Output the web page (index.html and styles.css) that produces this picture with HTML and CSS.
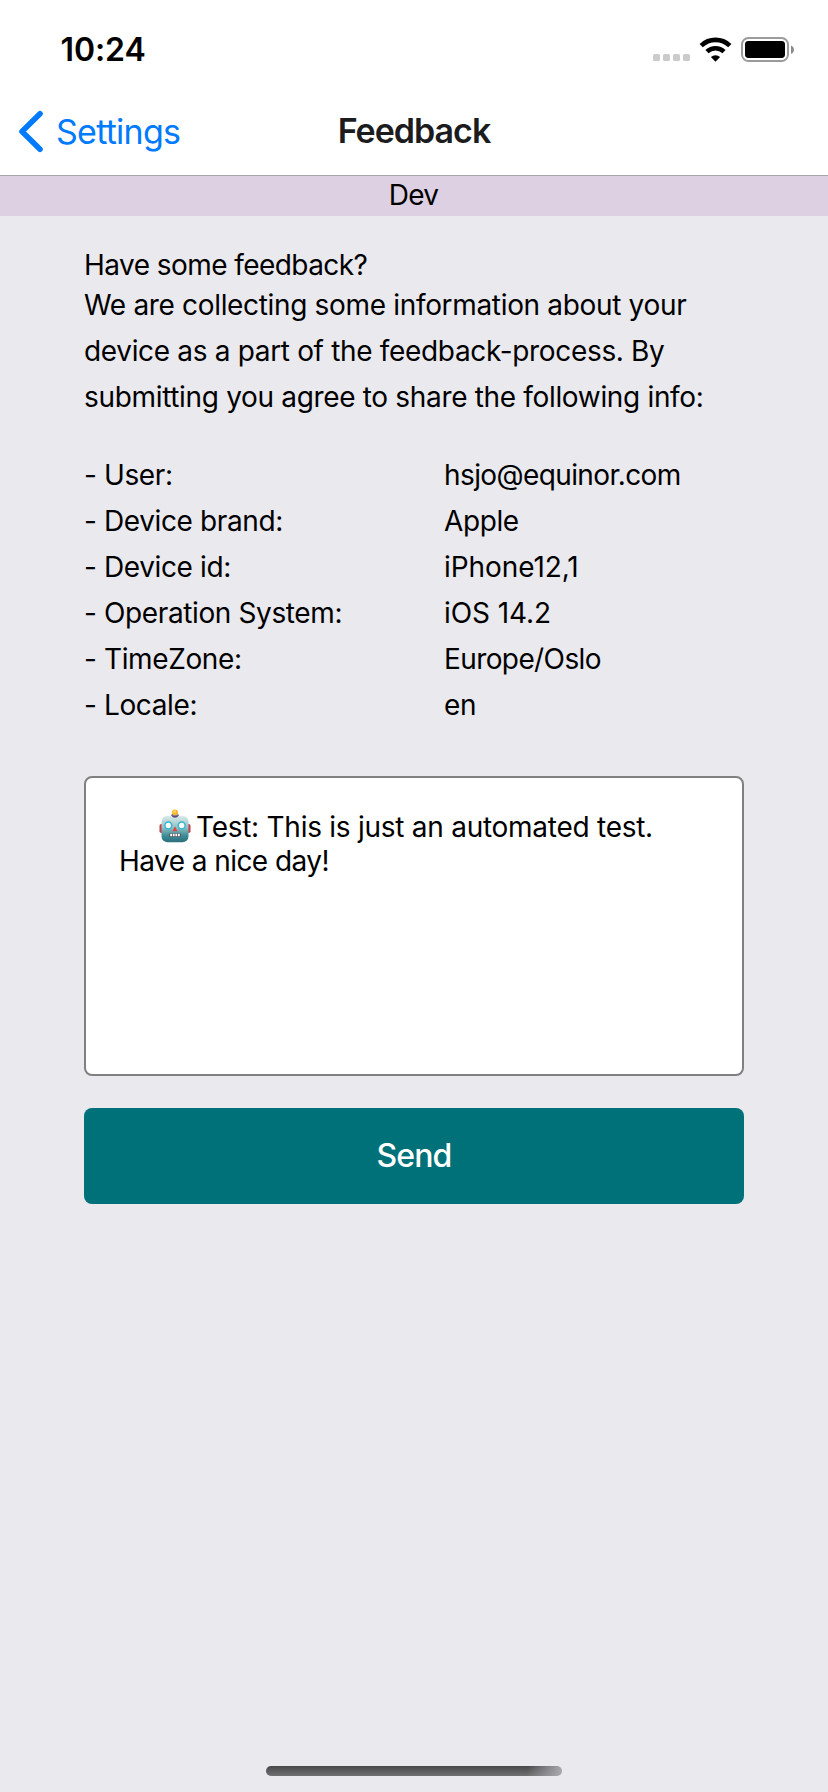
FILE: index.html
```html
<!DOCTYPE html>
<html lang="en">
<head>
<meta charset="utf-8">
<title>Feedback</title>
<link rel="stylesheet" href="styles.css">
</head>
<body>
<div class="screen">
  <header class="top">
    <div class="status">
      <span class="clock">10:24</span>
      <svg class="status-icons" width="144" height="32" viewBox="0 0 144 32">
        <g fill="#cbcbcb">
          <rect x="1" y="20" width="7" height="7" rx="1.6"/>
          <rect x="11" y="20" width="7" height="7" rx="1.6"/>
          <rect x="21" y="20" width="7" height="7" rx="1.6"/>
          <rect x="31" y="20" width="7" height="7" rx="1.6"/>
        </g>
        <g fill="none" stroke="#000" stroke-width="4.6">
          <path d="M49.2 11.6a20.6 20.6 0 0 1 28.6 0"/>
          <path d="M55 17.6a12.4 12.4 0 0 1 17 0"/>
        </g>
        <path d="M58.9 23.1a6.8 6.8 0 0 1 9.2 0L63.5 27.8z"/>
        <rect x="90" y="4" width="46" height="23" rx="6.5" fill="#fff" stroke="#9b9b9b" stroke-width="2"/>
        <rect x="93" y="7" width="40" height="17" rx="3.4"/>
        <path d="M139 11.5c4 1.5 4 7 0 8.5z" fill="#8c8c8c"/>
      </svg>
    </div>
    <nav class="nav">
      <a class="back">
        <svg width="26" height="44" viewBox="0 0 26 44"><path d="M23 4.800L5 22.500L23 40.200" fill="none" stroke="#007aff" stroke-width="5.600" stroke-linecap="round" stroke-linejoin="round"/></svg>
        <span class="back-label">Settings</span>
      </a>
      <h1 class="title">Feedback</h1>
    </nav>
  </header>
  <div class="env">Dev</div>
  <main class="content">
    <p class="lead">Have some feedback?</p>
    <p class="info">We are collecting some information about your<br>device as a part of the feedback-process. By<br>submitting you agree to share the following info:</p>
    <dl class="details">
      <dt>- User:</dt><dd class="tight">hsjo@equinor.com</dd>
      <dt>- Device brand:</dt><dd>Apple</dd>
      <dt>- Device id:</dt><dd class="loose">iPhone12,1</dd>
      <dt>- Operation System:</dt><dd class="loose">iOS 14.2</dd>
      <dt>- TimeZone:</dt><dd class="tight">Europe/Oslo</dd>
      <dt>- Locale:</dt><dd>en</dd>
    </dl>
    <div class="message">
      <svg class="robot" width="32" height="34" viewBox="0 0 32 34">
        <defs>
          <linearGradient id="face" x1="0" y1="0" x2="0" y2="1"><stop offset="0" stop-color="#dcebea"/><stop offset=".45" stop-color="#8fc0c4"/><stop offset=".75" stop-color="#3d8c96"/><stop offset="1" stop-color="#2a6f7a"/></linearGradient>
        </defs>
        <rect x="0.500" y="15" width="4" height="9" rx="1.800" fill="#c43d48"/>
        <rect x="27.500" y="15" width="4" height="9" rx="1.800" fill="#c43d48"/>
        <ellipse cx="16" cy="7" rx="4" ry="2.200" fill="#5b4a86"/>
        <circle cx="16" cy="3.500" r="3" fill="#f8b62d"/>
        <circle cx="15.600" cy="2.600" r="1.200" fill="#ffe27a"/>
        <rect x="2.500" y="6.800" width="27" height="26.500" rx="6" fill="url(#face)"/>
        <path d="M12.500 6.800h7q-1 2-3.500 2t-3.500-2" fill="#5b4a86"/>
        <circle cx="9.300" cy="16.500" r="3.400" fill="#fff" stroke="#35b4d3" stroke-width="1.500"/>
        <circle cx="22.700" cy="16.500" r="3.400" fill="#fff" stroke="#35b4d3" stroke-width="1.500"/>
        <path d="M16 17.300l2.500 5h-5z" fill="#e0433f"/>
        <rect x="10" y="24.200" width="12" height="3.800" rx="1.200" fill="#55535c"/>
        <path d="M11.200 26h9.800" stroke="#fff" stroke-width="2.400" stroke-dasharray="1.800 .8"/>
      </svg><span class="line-one">Test: This is just an automated test.</span><br>Have a nice day!
    </div>
    <button class="send">Send</button>
  </main>
  <div class="home"></div>
</div>
</body>
</html>
```
FILE: styles.css
```css
* { box-sizing: border-box; margin: 0; padding: 0; }
body { background: #eae9ee; }
.screen {
  display: flex; flex-direction: column;
  width: 828px; height: 1792px;
  background: #eae9ee; color: #000;
  font-family: Inter, "Liberation Sans", sans-serif;
  font-size: 28px; line-height: 46px; white-space: nowrap;
}
.top { height: 176px; background: #fff; border-bottom: 1px solid #a7a6aa; }
.status { display: flex; justify-content: space-between; height: 88px; padding: 30px 32px 0 60.5px; }
.clock { font-size: 32px; font-weight: 600; line-height: 39px; letter-spacing: -.1px; }
.status-icons { margin-top: 4px; }
.nav { display: grid; grid-template-columns: 1fr auto 1fr; height: 87px; padding: 0 17px; }
.back { display: flex; gap: 13px; color: #007aff; font-size: 34px; letter-spacing: -.75px; }
.back svg { margin-top: 21px; }
.back-label { line-height: 40px; padding-top: 24px; }
.title { padding-top: 23px; font-size: 34px; line-height: 40px; font-weight: 600; letter-spacing: -1px; color: #1c1c1e; }
.env { height: 40px; line-height: 38px; text-align: center; letter-spacing: -.8px; padding-right: 1px; background: #dcd0e2; }
.content { padding: 32px 84px 0; flex: 1; }
.lead { line-height: 34px; letter-spacing: -.56px; }
.info { letter-spacing: -.33px; }
.details { display: grid; grid-template-columns: 360px 1fr; margin: 32px 0 48px; letter-spacing: -.38px; }
.details .tight { letter-spacing: -.6px; }
.details .loose { letter-spacing: -.08px; }
.message {
  height: 300px; padding: 32px 33px;
  background: #fff; border: 2px solid #808080; border-radius: 8px;
  line-height: 34px; letter-spacing: -.56px;
}
.robot { margin: -8px 5px 0 40px; vertical-align: -6px; height: 34px; }
.line-one { letter-spacing: -.26px; }
.send {
  display: block; width: 660px; height: 96px; margin-top: 32px;
  border: 0; border-radius: 8px; background: #007079; color: #fff;
  font: 500 32px/96px Inter, "Liberation Sans", sans-serif; letter-spacing: -.9px;
}
.home {
  width: 296px; height: 10px; margin: 0 auto 16px; border-radius: 5px;
  background: linear-gradient(100deg, transparent 88%, #a6a5aa 99%), linear-gradient(#48484b, #707072);
}
```
